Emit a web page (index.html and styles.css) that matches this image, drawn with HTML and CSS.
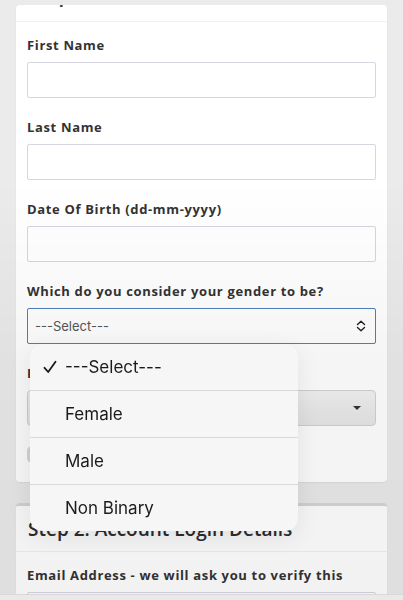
FILE: index.html
```html
<!DOCTYPE html>
<html>
<head>
<meta charset="utf-8">
<link rel="stylesheet" href="styles.css">
</head>
<body>
<div class="page">
  <section class="card">
    <div class="card-head cut"><h2 class="card-title">Step 1: Personal Details</h2></div>
    <div class="card-body">
      <div class="field">
        <label class="label">First Name</label>
        <div class="input"></div>
      </div>
      <div class="field">
        <label class="label">Last Name</label>
        <div class="input"></div>
      </div>
      <div class="field">
        <label class="label">Date Of Birth (dd-mm-yyyy)</label>
        <div class="input"></div>
      </div>
      <div class="field menu-anchor">
        <label class="label">Which do you consider your gender to be?</label>
        <div class="input select focus">
          <span class="select-text">---Select---</span>
          <svg class="updown" width="10" height="12" viewBox="0 0 10 12"><path d="M1.5 4.5 L5 1.2 L8.5 4.5 M1.5 7.5 L5 10.8 L8.5 7.5" fill="none" stroke="#222" stroke-width="1.4" stroke-linecap="round" stroke-linejoin="round"/></svg>
        </div>
        <ul class="menu">
          <li class="menu-item"><svg class="check" width="14" height="14" viewBox="0 0 14 14"><path d="M1.5 7.8 L5.2 12 L12.5 1.8" fill="none" stroke="#1b1b1b" stroke-width="1.8" stroke-linecap="round" stroke-linejoin="round"/></svg>---Select---</li>
          <li class="menu-item">Female</li>
          <li class="menu-item">Male</li>
          <li class="menu-item">Non Binary</li>
        </ul>
      </div>
      <div class="field">
        <label class="label">In which country do you live?</label>
        <div class="input select grey">
          <span class="caret"></span>
        </div>
      </div>
      <div class="toggle"></div>
    </div>
  </section>
  <section class="card card-2">
    <div class="card-head big"><h2 class="card-title t2">Step 2: Account Login Details</h2></div>
    <div class="card-body">
      <div class="field">
        <label class="label">Email Address - we will ask you to verify this</label>
        <div class="input"></div>
      </div>
    </div>
  </section>
</div>
<div class="shade"></div>
<div class="toolbar"></div>
</body>
</html>
```
FILE: styles.css
```css
html, body { margin: 0; padding: 0; }
body {
  background: #ebebeb;
  font-family: "Open Sans", "Liberation Sans", sans-serif;
  width: 403px;
  height: 600px;
  overflow: hidden;
}
.page { padding-top: 5px; }
.card {
  margin: 0 16px;
  background: #fff;
  border-radius: 4px;
  box-shadow: 0 1px 2px rgba(0,0,0,0.06);
}
.card-2 {
  margin-top: 21px;
  border-top: 3px solid #d6d7dc;
}
.card-head {
  border-bottom: 1px solid #f1f1f3;
  padding: 0 12px;
  overflow: hidden;
}
.card-head.cut { height: 16px; }
.card-head.cut .card-title { margin-top: -22px; }
.card-title {
  margin: 0;
  font-size: 20px;
  line-height: 24px;
  font-weight: 600;
  color: #333;
}
.card-head.big { height: 45px; display: flex; align-items: center; }
.t2 { font-size: 19px; color: #2e2e2e; }
.card-body { padding: 14px 11px 19px; }
.field { margin-bottom: 20px; }
.label {
  display: block;
  font-size: 13px;
  line-height: 18px;
  font-weight: 700;
  color: #333;
  letter-spacing: 0.65px;
  margin-bottom: 8px;
}
.input {
  height: 34px;
  border: 1px solid #d6d6e2;
  border-radius: 2px;
  background: #fff;
}
.select { display: flex; align-items: center; justify-content: space-between; padding: 0 9px 0 7px; }
.focus { border-color: #4f81b9; }
.select-text {
  font-family: "Inter", "Liberation Sans", sans-serif;
  font-size: 13px;
  color: #555;
}
.updown { display: block; }
.grey {
  border-color: #d2d2d2;
  border-radius: 4px;
  background: linear-gradient(#f2f2f2, #e6e6e6);
  justify-content: flex-end;
  padding-right: 14px;
}
.caret {
  width: 0; height: 0;
  border-left: 4px solid transparent;
  border-right: 4px solid transparent;
  border-top: 4px solid #333;
}
.toggle {
  width: 22px; height: 17px;
  border-radius: 5px;
  background: #d9d9d9;
}
.menu-anchor { position: relative; }
.menu {
  position: absolute;
  left: 3px;
  top: 100%;
  width: 268px;
  margin: 0;
  padding: 0;
  list-style: none;
  background: #f6f6f6;
  border-radius: 13px;
  box-shadow: 0 6px 24px rgba(0,0,0,0.08);
  overflow: hidden;
  z-index: 5;
}
.menu-item {
  height: 46px;
  display: flex;
  align-items: center;
  padding-left: 35px;
  position: relative;
  font-family: "Inter", "Liberation Sans", sans-serif;
  font-size: 17px;
  color: #1b1b1b;
  border-top: 1px solid #d9d9d9;
}
.menu-item:first-child { border-top: none; }
.check {
  position: absolute;
  left: 13px;
  top: 16px;
}
.shade {
  position: fixed;
  inset: 0;
  pointer-events: none;
  background: linear-gradient(to bottom, rgba(0,0,0,0) 30%, rgba(0,0,0,0.04) 60%, rgba(0,0,0,0.05) 100%);
  z-index: 3;
}
.toolbar {
  position: fixed;
  left: 0; right: 0; bottom: 0;
  height: 5px;
  background: #e9e9e9;
  border-top: 1px solid #d8d8d8;
  z-index: 6;
}
```
